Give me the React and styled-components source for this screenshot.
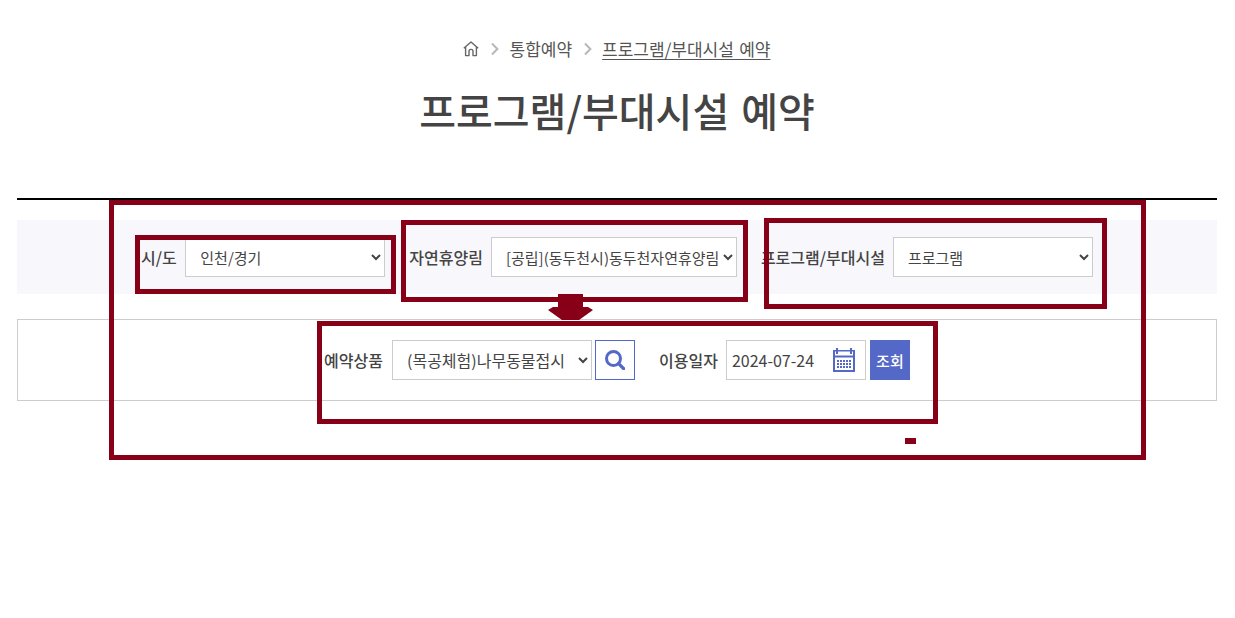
import React from 'react';
import styled, { createGlobalStyle } from 'styled-components';

const GlobalStyle = createGlobalStyle`
  html, body {
    margin: 0;
    padding: 0;
    background: #fff;
    font-family: "Noto Sans CJK KR", "Noto Sans", sans-serif;
    color: #444;
  }
`;

const Page = styled.div`
  position: relative;
  width: 1235px;
  height: 618px;
  overflow: hidden;
`;

const Container = styled.main`
  width: 1200px;
  margin-left: 17px;
`;

const Breadcrumb = styled.nav`
  display: flex;
  justify-content: center;
  align-items: center;
  gap: 12px;
  height: 24px;
  padding: 37px 1px 0 0;
  font-size: 17px;
  line-height: 24px;
  color: #555;
`;

const Crumb = styled.a`
  color: #555;
  word-spacing: 1.5px;
  margin-left: ${p => (p.$current ? -2 : -1)}px;
  text-decoration: ${p => (p.$current ? 'underline' : 'none')};
  text-underline-offset: 3px;
`;

const Title = styled.h1`
  margin: 19px 0 0;
  height: 118px;
  text-align: center;
  font-size: 40px;
  font-weight: 500;
  line-height: 60px;
  word-spacing: 3px;
  color: #444;
`;

const Rule = styled.hr`
  margin: 0;
  height: 2px;
  border: 0;
  background: #000;
`;

const RegionBar = styled.section`
  margin-top: 20px;
  height: 74px;
  display: flex;
  justify-content: center;
  align-items: center;
  gap: 24px;
  background: #f7f7fc;
`;

const ProductBar = styled.section`
  margin-top: 25px;
  height: 80px;
  border: 1px solid #ccc;
  display: flex;
  justify-content: center;
  align-items: center;
`;

const Field = styled.div`
  display: flex;
  align-items: center;
  gap: ${p => p.$gap || 9}px;
`;

const Label = styled.label`
  font-size: 16px;
  font-weight: 500;
  color: #444;
  white-space: nowrap;
`;

const Select = styled.select`
  width: ${p => p.$width}px;
  height: 40px;
  box-sizing: border-box;
  border: 1px solid #ccc;
  border-radius: 0;
  background: #fff;
  padding: 0 0 0 10px;
  font-family: inherit;
  font-size: ${p => p.$size || 15}px;
  color: #444;
`;

const IconButton = styled.button`
  width: 40px;
  height: 40px;
  margin-left: 3px;
  padding: 0;
  box-sizing: border-box;
  border: 1px solid #5468c8;
  background: #fff;
  display: flex;
  align-items: center;
  justify-content: center;
`;

const DateBox = styled.div`
  width: 140px;
  height: 40px;
  box-sizing: border-box;
  border: 1px solid #ccc;
  display: flex;
  align-items: center;
  justify-content: space-between;
  padding: 0 10px 0 5px;
  font-size: 16px;
  color: #444;
`;

const SubmitButton = styled.button`
  width: 40px;
  height: 40px;
  margin-left: 4px;
  padding: 0;
  border: 0;
  background: #5468c8;
  color: #fff;
  font-family: inherit;
  font-size: 15px;
  font-weight: 500;
`;

const DateField = styled(Field)`
  margin-left: 24px;
`;

const Mark = styled.div`
  position: absolute;
  box-sizing: border-box;
  left: ${p => p.$x}px;
  top: ${p => p.$y}px;
  width: ${p => p.$w}px;
  height: ${p => p.$h}px;
  border: 5px solid #880017;
  pointer-events: none;
`;

const Dash = styled.div`
  position: absolute;
  left: 905px;
  top: 438px;
  width: 11px;
  height: 6px;
  background: #880017;
`;

const ArrowMark = styled.svg`
  position: absolute;
  left: 548px;
  top: 294px;
`;

const HomeIcon = () => (
  <svg width="16" height="16" viewBox="0 0 16 16" fill="none" stroke="#666" strokeWidth="1.4" strokeLinejoin="round">
    <path d="M.8 7.2 8 1 15.2 7.2M2.6 5.8V14.6H6V10.4a2 2 0 0 1 4 0V14.6H13.4V5.8" />
  </svg>
);

const Chevron = () => (
  <svg width="8" height="14" viewBox="0 0 8 14" fill="none" stroke="#b8b8b8" strokeWidth="2">
    <path d="M1 1.5 6.4 7 1 12.5" />
  </svg>
);

const SearchIcon = () => (
  <svg width="20" height="20" viewBox="0 0 20 20" fill="none" stroke="#5468c8">
    <circle cx="8.5" cy="8.5" r="7" strokeWidth="3" />
    <path d="M13.6 13.6 18.6 18.6" strokeWidth="3.4" strokeLinecap="round" />
  </svg>
);

const CalendarIcon = () => (
  <svg width="22" height="24" viewBox="0 0 22 24" fill="#5468c8">
    <path d="M0 2h22v22H0zM2 9.5V22h18V9.5zM2 3.5v4h18v-4z" fillRule="evenodd" />
    <rect x="3" y="0" width="2" height="6" />
    <rect x="17" y="0" width="2" height="6" />
    {[12, 15, 18].map(y =>
      [4, 7, 10, 13, 16].map(x => <rect key={`${x}-${y}`} x={x} y={y} width="2" height="2" />)
    )}
  </svg>
);

const marks = [
  { x: 109, y: 200, w: 1037, h: 260 },
  { x: 135, y: 235, w: 261, h: 59 },
  { x: 401, y: 220, w: 347, h: 82 },
  { x: 764, y: 218, w: 343, h: 91 },
  { x: 317, y: 321, w: 621, h: 103 },
];

export default function App() {
  return (
    <Page>
      <GlobalStyle />
      <Container>
        <Breadcrumb>
          <HomeIcon />
          <Chevron />
          <Crumb>통합예약</Crumb>
          <Chevron />
          <Crumb $current>프로그램/부대시설 예약</Crumb>
        </Breadcrumb>
        <Title>프로그램/부대시설 예약</Title>
        <Rule />
        <RegionBar>
          <Field $gap={8.5}>
            <Label>시/도</Label>
            <Select $width={200} defaultValue="인천/경기">
              <option>인천/경기</option>
            </Select>
          </Field>
          <Field $gap={8}>
            <Label>자연휴양림</Label>
            <Select $width={246} defaultValue="[공립](동두천시)동두천자연휴양림">
              <option>[공립](동두천시)동두천자연휴양림</option>
            </Select>
          </Field>
          <Field $gap={8}>
            <Label>프로그램/부대시설</Label>
            <Select $width={200} defaultValue="프로그램">
              <option>프로그램</option>
            </Select>
          </Field>
        </RegionBar>
        <ProductBar>
          <Field>
            <Label>예약상품</Label>
            <Select $width={200} $size={16} defaultValue="(목공체험)나무동물접시">
              <option>(목공체험)나무동물접시</option>
            </Select>
          </Field>
          <IconButton aria-label="검색">
            <SearchIcon />
          </IconButton>
          <DateField $gap={8}>
            <Label>이용일자</Label>
            <DateBox>
              2024-07-24
              <CalendarIcon />
            </DateBox>
          </DateField>
          <SubmitButton>조회</SubmitButton>
        </ProductBar>
      </Container>
      {marks.map(m => (
        <Mark key={`${m.x}-${m.y}`} $x={m.x} $y={m.y} $w={m.w} $h={m.h} />
      ))}
      <ArrowMark width="45" height="30" viewBox="0 0 45 30" fill="#880017">
        <path d="M10 0h25v13h5l5 3-14 10H14L0 16l5-3h5z" />
      </ArrowMark>
      <Dash />
    </Page>
  );
}
